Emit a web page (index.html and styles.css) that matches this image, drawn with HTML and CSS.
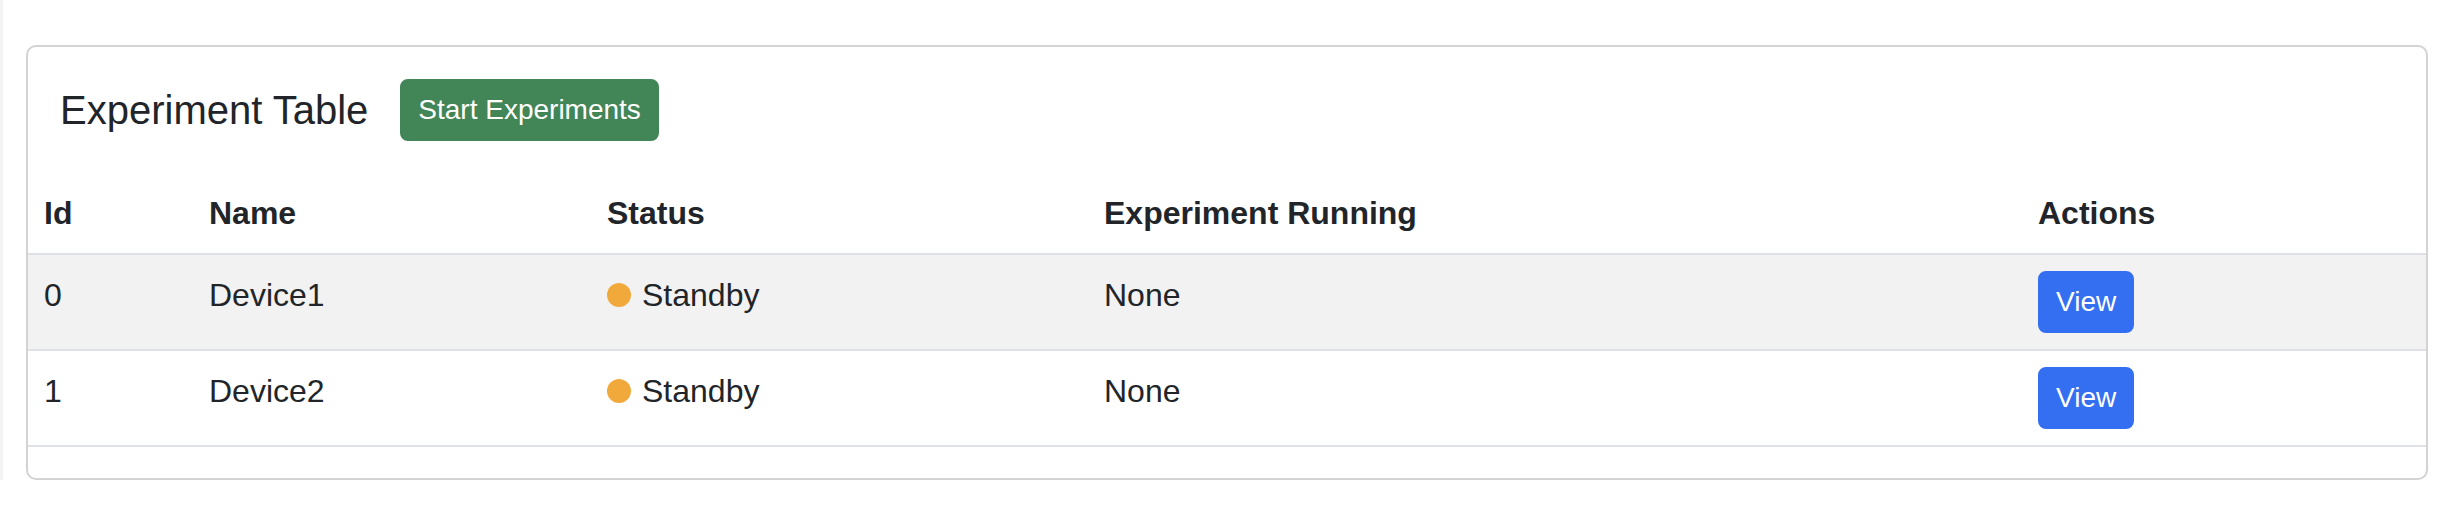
FILE: index.html
```html
<!DOCTYPE html>
<html lang="en">
<head>
<meta charset="utf-8">
<title>Experiment Table</title>
<link rel="stylesheet" href="styles.css">
</head>
<body>
<div class="page">
  <div class="card">
    <div class="card-header">
      <h2 class="card-title">Experiment Table</h2>
      <button class="btn btn-success">Start Experiments</button>
    </div>
    <table class="table">
      <colgroup>
        <col class="col-id">
        <col class="col-name">
        <col class="col-status">
        <col class="col-exp">
        <col class="col-actions">
      </colgroup>
      <thead>
        <tr>
          <th>Id</th>
          <th>Name</th>
          <th>Status</th>
          <th>Experiment Running</th>
          <th>Actions</th>
        </tr>
      </thead>
      <tbody>
        <tr class="striped">
          <td>0</td>
          <td>Device1</td>
          <td><span class="status"><span class="dot"></span>Standby</span></td>
          <td>None</td>
          <td><button class="btn btn-primary">View</button></td>
        </tr>
        <tr>
          <td>1</td>
          <td>Device2</td>
          <td><span class="status"><span class="dot"></span>Standby</span></td>
          <td>None</td>
          <td><button class="btn btn-primary">View</button></td>
        </tr>
      </tbody>
    </table>
  </div>
</div>
</body>
</html>
```

FILE: styles.css
```css
* {
  box-sizing: border-box;
}

html, body {
  margin: 0;
  padding: 0;
  background: #ffffff;
}

body {
  font-family: "Liberation Sans", Arial, Helvetica, sans-serif;
  font-size: 32px;
  line-height: 48px;
  color: #212529;
}

.page {
  border-left: 3px solid #f3f3f3;
  padding: 45px 14px 0 23px;
}

.card {
  border: 2px solid #d3d3d3;
  border-radius: 10px;
  background: #ffffff;
  overflow: hidden;
}

.card-header {
  display: flex;
  align-items: center;
  padding: 32px 32px;
}

.card-title {
  margin: 0;
  font-size: 40px;
  line-height: 48px;
  font-weight: 400;
  color: #212529;
}

.btn {
  font-family: "Liberation Sans", Arial, Helvetica, sans-serif;
  font-size: 28px;
  line-height: 42px;
  padding: 8px 16px;
  border: 2px solid transparent;
  border-radius: 8px;
  color: #ffffff;
  cursor: pointer;
  display: inline-block;
}

.btn-success {
  margin-left: 32px;
  background: #428557;
  border-color: #428557;
}

.btn-primary {
  background: #346ef1;
  border-color: #346ef1;
}

.table {
  width: 100%;
  border-collapse: collapse;
  table-layout: fixed;
  margin-bottom: 31px;
}

.col-id { width: 165px; }
.col-name { width: 398px; }
.col-status { width: 497px; }
.col-exp { width: 934px; }
.col-actions { width: 404px; }

.table th,
.table td {
  text-align: left;
  vertical-align: top;
  padding: 16px 16px;
  border-bottom: 2px solid #dee2e6;
}

.table th {
  font-weight: 700;
}

.table tr.striped td {
  background: #f2f2f2;
}

.status {
  display: inline-flex;
  align-items: center;
}

.dot {
  width: 24px;
  height: 24px;
  border-radius: 50%;
  background: #f2a93b;
  margin-right: 11px;
  flex: none;
}
```
